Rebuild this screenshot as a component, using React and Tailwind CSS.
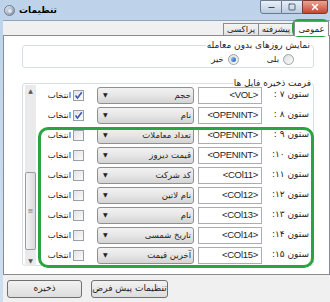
import { Minus, Square, X } from 'lucide-react';

const rows = [
  { label: 'ستون ۷ :', value: '<VOL>', field: 'حجم', checked: true },
  { label: 'ستون ۸ :', value: '<OPENINT>', field: 'نام', checked: true },
  { label: 'ستون ۹ :', value: '<OPENINT>', field: 'تعداد معاملات', checked: false },
  { label: 'ستون ۱۰:', value: '<OPENINT>', field: 'قیمت دیروز', checked: false },
  { label: 'ستون ۱۱:', value: '<COl11>', field: 'کد شرکت', checked: false },
  { label: 'ستون ۱۲:', value: '<COl12>', field: 'نام لاتین', checked: false },
  { label: 'ستون ۱۳:', value: '<COl13>', field: 'نام', checked: false },
  { label: 'ستون ۱۴:', value: '<COl14>', field: 'تاریخ شمسی', checked: false },
  { label: 'ستون ۱۵:', value: '<COl15>', field: 'آخرین قیمت', checked: false },
];

function Checkbox({ checked }) {
  return (
    <div className="w-[11px] h-[11px] border border-[#9a9fa8] bg-gradient-to-br from-[#e4e4e4] to-[#fbfbfb] flex items-center justify-center">
      {checked && (
        <svg width="9" height="9" viewBox="0 0 9 9">
          <path d="M1.5 4.5 L3.5 7 L7.8 1.2" fill="none" stroke="#3a57a6" strokeWidth="1.5" />
        </svg>
      )}
    </div>
  );
}

function Radio({ selected }) {
  return (
    <div className="w-[11px] h-[11px] rounded-full border border-[#9ba2ab] bg-gradient-to-br from-[#dcdcdc] to-[#fcfcfc] flex items-center justify-center">
      {selected && <div className="w-[5px] h-[5px] rounded-full bg-gradient-to-br from-[#8fc4f4] to-[#1d5fa8]" />}
    </div>
  );
}

function Row({ row }) {
  return (
    <div className="flex items-center h-[20px] whitespace-nowrap">
      <div className="w-[35px] text-right" dir="rtl">انتخاب</div>
      <div className="ml-[2px]">
        <Checkbox checked={row.checked} />
      </div>
      <div className="ml-[13px] w-[97px] h-[17px] rounded-[3px] border border-[#8e8f8f] bg-gradient-to-b from-[#f2f2f2] via-[#e6e6e6] to-[#d4d4d4] flex items-center pl-[5px] pr-[2px]">
        <span className="text-[6px] leading-none text-[#222]">▼</span>
        <span className="flex-1 text-right" dir="rtl">{row.field}</span>
      </div>
      <div className="ml-[4px] w-[64px] h-[17px] border border-[#abadb3] bg-white flex items-center justify-end pr-[3px] text-[9.5px] tracking-[-0.3px] font-['Liberation_Sans',sans-serif]">
        {row.value}
      </div>
      <div className="ml-[1px] w-[49px] text-right pr-[3px] text-[9px]" dir="rtl">{row.label}</div>
    </div>
  );
}

export default function App() {
  return (
    <div className="relative w-[330px] h-[302px] overflow-hidden flex flex-col bg-gradient-to-b from-[#bed3ea] to-[#cfdff0] text-[8.5px] text-[#1e1e1e] font-['DejaVu_Sans',sans-serif]">
      {/* title bar */}
      <div className="h-[20px] flex items-start shrink-0">
        <div className="flex items-center mt-[4px] ml-[4px] gap-[4px]">
          <div className="w-[11px] h-[11px] rounded-full bg-gradient-to-br from-[#e8eef6] to-[#7f8fa6] border border-[#6d7c91] flex items-center justify-center">
            <div className="w-[4px] h-[4px] rounded-full bg-[#dfe6ef]" />
          </div>
          <span className="text-[9px] font-bold text-black" dir="rtl">تنظیمات</span>
        </div>
        <div className="ml-auto flex mr-[2px]">
          <div className="w-[22px] h-[14px] border border-[#6b7a8e] rounded-bl-[3px] bg-gradient-to-b from-[#e9f0f8] to-[#b9cbe0] flex items-center justify-center">
            <Minus size={9} strokeWidth={3} color="#3c4a5c" />
          </div>
          <div className="w-[20px] h-[14px] border-y border-[#6b7a8e] bg-gradient-to-b from-[#e9f0f8] to-[#b9cbe0] flex items-center justify-center">
            <Square size={8} strokeWidth={2.5} color="#3c4a5c" />
          </div>
          <div className="w-[26px] h-[14px] border border-[#7a3a32] rounded-br-[3px] bg-gradient-to-b from-[#e8a493] to-[#c5432f] flex items-center justify-center">
            <X size={10} strokeWidth={3.5} color="#ffffff" />
          </div>
        </div>
      </div>

      {/* client area */}
      <div className="flex-1 ml-[3px] bg-[#f0f0f0] border-t border-[#8fa3bb] flex flex-col">
        {/* tabs */}
        <div className="h-[14px] flex justify-end items-end pr-[1px]" dir="ltr">
          <div className="h-[12px] w-[36px] border border-b-0 border-[#898c95] bg-gradient-to-b from-[#f4f4f4] to-[#e2e2e2] flex items-center justify-center" dir="rtl">پراکسی</div>
          <div className="h-[12px] w-[35px] border border-b-0 border-l-0 border-[#898c95] bg-gradient-to-b from-[#f4f4f4] to-[#e2e2e2] flex items-center justify-center" dir="rtl">پیشرفته</div>
          <div className="h-[15px] w-[35px] -mb-[1px] border border-b-0 border-[#898c95] bg-white flex items-center justify-center relative z-10" dir="rtl">عمومی</div>
        </div>

        {/* panel */}
        <div className="h-[240px] bg-white border border-[#898c95] flex flex-col pl-[18px] pr-[15px]" dir="rtl">
          <fieldset className="mt-[4px] h-[28px] border border-[#d5dfe5] rounded-[3px] px-[3px]">
            <legend className="px-[1px] -mr-[1px] leading-[10px] text-[9px]">نمایش روزهای بدون معامله</legend>
            <div className="flex items-center gap-[4px] pr-[16px] mt-[3px]">
              <Radio selected={false} />
              <span>بلی</span>
              <div className="w-[20px]" />
              <Radio selected={true} />
              <span>خیر</span>
            </div>
          </fieldset>

          <fieldset className="mt-[11px] h-[187px] border border-[#d5dfe5] rounded-[3px] pl-[2px] pr-0" dir="rtl">
            <legend className="px-[1px] mr-[1px] leading-[9px] text-[9px]">فرمت ذخیره فایل ها</legend>
            <div className="flex h-full -mt-[3px]" dir="ltr">
              {/* scrollbar */}
              <div className="w-[11px] h-[181px] bg-[#eaeaea] flex flex-col items-center">
                <div className="h-[11px] flex items-center justify-center text-[6px] text-[#555]">▲</div>
                <div className="flex-1 w-full relative">
                  <div className="absolute left-0 right-0 top-[76px] h-[78px] rounded-[2px] border border-[#9b9b9b] bg-gradient-to-r from-[#f5f5f5] to-[#dadada] flex items-center justify-center text-[7px] text-[#777]">≡</div>
                </div>
                <div className="h-[11px] flex items-center justify-center text-[6px] text-[#555]">▼</div>
              </div>
              <div className="flex-1 flex flex-col">
                {rows.map((r, i) => (
                  <Row key={i} row={r} />
                ))}
              </div>
            </div>
          </fieldset>
        </div>

        {/* footer */}
        <div className="flex-1 flex items-center gap-[9px] pl-[4px] whitespace-nowrap text-[9px]" dir="ltr">
          <div className="w-[75px] h-[18px] rounded-[3px] border border-[#707070] bg-gradient-to-b from-[#f2f2f2] to-[#dddddd] flex items-center justify-center" dir="rtl">ذخیره</div>
          <div className="w-[77px] h-[18px] rounded-[3px] border border-[#707070] bg-gradient-to-b from-[#f2f2f2] to-[#dddddd] flex items-center justify-center" dir="rtl">تنظیمات پیش فرض</div>
        </div>
      </div>

      {/* annotations */}
      <div className="absolute left-[38px] top-[127px] w-[276px] h-[141px] border-[3px] border-[#2aa443] rounded-[10px] pointer-events-none" />
      <div className="absolute left-[292px] top-[19px] w-[37px] h-[18px] border-[3px] border-[#2aa443] rounded-[6px] pointer-events-none" />
    </div>
  );
}
